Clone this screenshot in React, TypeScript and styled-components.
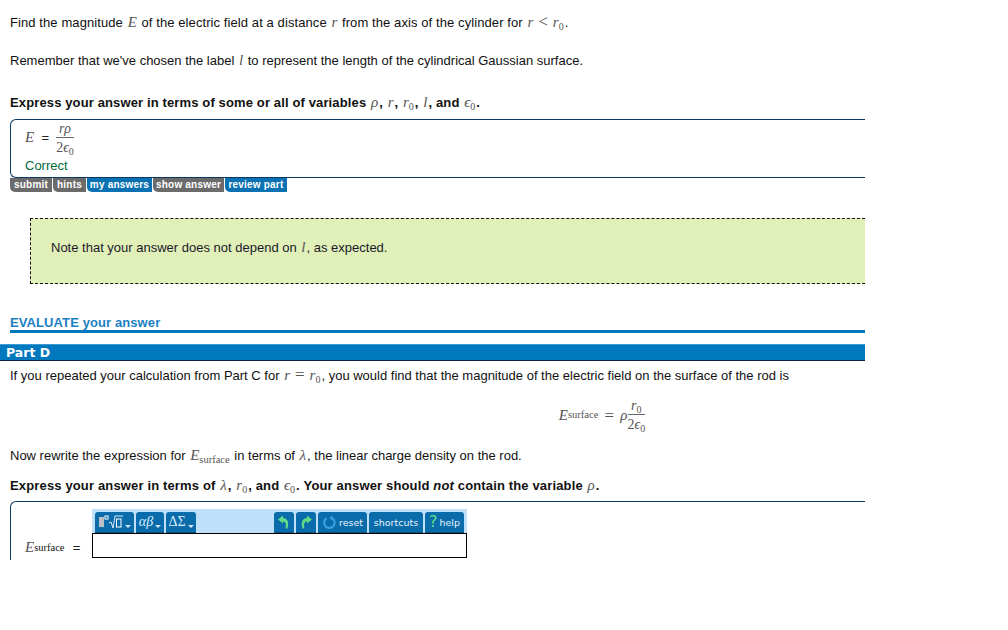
import React from "react";
import styled, { createGlobalStyle } from "styled-components";

const Global = createGlobalStyle`
  html, body { margin: 0; padding: 0; background: #fff; }
  body { font-family: "Liberation Sans", Arial, sans-serif; font-size: 13px; color: #111; }
`;
const Page = styled.div`width: 865px; height: 630px; overflow: hidden;`;
const Body = styled.div`padding: 15px 0 0 10px;`;
const Para = styled.p<{ $gap: number; $bold?: boolean; $track?: number }>`
  margin: 0 0 ${(p) => p.$gap}px;
  line-height: 15px;
  height: 15px;
  font-size: 13px;
  font-weight: ${(p) => (p.$bold ? 700 : 400)};
  letter-spacing: ${(p) => p.$track ?? 0}px;
  white-space: nowrap;
`;
const M = styled.span`
  font-family: "Liberation Serif", serif;
  font-style: italic;
  font-weight: 400;
  font-size: 15px;
  line-height: 0;
  color: #555;
  margin: 0 1px;
  letter-spacing: 0;
  sub { font-style: normal; font-size: 10px; line-height: 0; vertical-align: -3px; }
`;
const Rel = styled.span`
  font-family: "Liberation Serif", serif;
  font-size: 17px;
  line-height: 0;
  color: #555;
  margin: 0 4px;
  letter-spacing: 0;
`;
const AnswerBox = styled.div`
  height: 59px;
  box-sizing: border-box;
  border: 1px solid #0b3a66;
  border-right: none;
  border-radius: 6px 0 0 6px;
  padding: 0 0 0 14px;
`;
const EquationRow = styled.div`display: flex; align-items: center; height: 35px;`;
const EqLabel = styled.span`
  font-family: "Liberation Serif", serif;
  font-style: italic;
  font-size: 15px;
  color: #555;
`;
const EqSign = styled.span<{ $w: number }>`
  width: ${(p) => p.$w}px;
  text-align: center;
  font-size: 13px;
  color: #222;
`;
const DisplaySign = styled.span`
  width: 22px;
  text-align: center;
  font-family: "Liberation Serif", serif;
  font-size: 17px;
  line-height: 15px;
  color: #555;
`;
const Frac = styled.span`
  display: inline-flex;
  flex-direction: column;
  align-items: center;
  font-family: "Liberation Serif", serif;
  font-size: 14px;
  color: #555;
  line-height: 15px;
  sub { font-size: 10px; line-height: 0; vertical-align: -3px; }
  i { font-style: italic; }
`;
const FracTop = styled.span`
  display: block;
  width: 100%;
  text-align: center;
  border-bottom: 1px solid #666;
  padding-bottom: 1px;
  margin-bottom: 2px;
`;
const Correct = styled.div`color: #006a3a; font-size: 13px; line-height: 15px; margin-top: 3px;`;
const Tabs = styled.div`display: flex; height: 13px; margin-bottom: 27px;`;
const Tab = styled.span<{ $w: number; $blue?: boolean }>`
  width: ${(p) => p.$w}px;
  box-sizing: border-box;
  height: 14px;
  background: ${(p) => (p.$blue ? "#0a71b3" : "#6b6b6b")};
  border-right: 1px solid #fff;
  border-radius: 0 0 0 5px;
  color: #fff;
  font-weight: 700;
  font-size: 10px;
  letter-spacing: 0.2px;
  line-height: 13px;
  text-align: center;
  white-space: nowrap;
`;
const Note = styled.div`
  margin-left: 20px;
  height: 66px;
  box-sizing: border-box;
  border: 1px dashed #111;
  border-right: none;
  background: #e1efb9;
  padding: 0 0 8px 20px;
  display: flex;
  align-items: center;
  font-size: 13px;
  color: #1a1a2a;
`;
const Evaluate = styled.h3`
  margin: 31px 0 11px;
  height: 15px;
  font-size: 13px;
  letter-spacing: 0.1px;
  line-height: 15px;
  font-weight: 700;
  color: #1a80c4;
  border-bottom: 3px solid #0278be;
`;
const PartBar = styled.div`
  height: 17px;
  box-sizing: border-box;
  background: #0278be;
  border-top: 1px solid #3b9bd4;
  border-bottom: 1px solid #06223f;
  color: #fff;
  font-family: "DejaVu Sans", sans-serif;
  font-weight: 700;
  font-size: 12.5px;
  line-height: 15px;
  padding-left: 6px;
`;
const PartBody = styled.div`padding: 7px 0 0 10px;`;
const Display = styled.div`
  display: flex;
  justify-content: center;
  align-items: center;
  height: 40px;
  margin: 12px 0 13px;
  padding-left: 329px;
  font-family: "Liberation Serif", serif;
  font-size: 15px;
  color: #555;
  i { font-style: italic; }
`;
const Small = styled.span`font-size: 10.5px; font-style: normal; font-family: "Liberation Serif", serif; vertical-align: -3px; line-height: 0;`;
const InputBox = styled.div`
  height: 59px;
  box-sizing: border-box;
  border-top: 1px solid #0b3a66;
  border-left: 1px solid #0b3a66;
  border-top-left-radius: 6px;
  padding: 7px 0 0 14px;
  display: flex;
  align-items: flex-end;
`;
const InputLabel = styled.div`display: flex; align-items: center; height: 25px; width: 67px; margin-bottom: 0;`;
const Editor = styled.div`width: 375px; display: flex; flex-direction: column; margin-bottom: 2px;`;
const Toolbar = styled.div`
  height: 24px;
  background: #bfdffb;
  display: flex;
  justify-content: space-between;
  padding: 3px 3px 0;
  box-sizing: border-box;
`;
const Group = styled.div`display: flex; gap: 2px;`;
const ToolBtn = styled.span<{ $w: number }>`
  width: ${(p) => p.$w}px;
  height: 21px;
  box-sizing: border-box;
  background: #0a6cab;
  border-radius: 3px 3px 0 0;
  border-bottom: 1px solid #07517f;
  color: #e8f4fc;
  display: flex;
  align-items: center;
  justify-content: center;
  gap: 2px;
  font-family: "DejaVu Sans", sans-serif;
  font-size: 9.5px;
  white-space: nowrap;
`;
const Sym = styled.span`font-family: "Liberation Serif", serif; font-size: 14px; color: #d8ecfa; font-style: italic;`;
const SymUp = styled(Sym)`font-style: normal;`;
const Caret = styled.span`
  width: 0; height: 0; margin-top: 8px;
  border-left: 3px solid transparent;
  border-right: 3px solid transparent;
  border-top: 3px solid #cfe6f8;
`;
const Help = styled.span`color: #63e08a; font-size: 16px; font-weight: 400; font-family: "DejaVu Sans", sans-serif; line-height: 1;`;
const Field = styled.div`height: 25px; box-sizing: border-box; border: 1px solid #000; background: #fff;`;

const Tpl = () => (
  <svg width="24" height="16" viewBox="0 0 24 16" fill="none">
    <rect x="0" y="3" width="5" height="10" fill="#b9bfc4" />
    <rect x="6" y="2" width="3" height="3" stroke="#fff" />
    <path d="M10 9 L12 8 L14 14 L16 2 L24 2" stroke="#d8ecfa" strokeWidth="1" />
    <rect x="17.5" y="5" width="4.5" height="8" stroke="#fff" />
  </svg>
);
const Arrow = ({ flip }: { flip?: boolean }) => (
  <svg width="14" height="14" viewBox="0 0 14 14" fill="none" style={flip ? { transform: "scaleX(-1)" } : undefined}>
    <path d="M1 4.5 L6 0.5 L6 3 C10 3 12.5 6.5 10.5 13.5 L8.5 13.5 C9.5 9 8.5 6.5 6 6.5 L6 8.5 Z" fill="#5fdc86" />
  </svg>
);
const Reset = () => (
  <svg width="15" height="15" viewBox="0 0 15 15" fill="none">
    <path d="M4.5 3.2 A5.3 5.3 0 1 0 10 3" stroke="#3aa4e8" strokeWidth="2" />
    <path d="M10.5 0.5 L10.5 5.5 L7.5 3 Z" fill="#3aa4e8" />
  </svg>
);

export default function App() {
  return (
    <Page>
      <Global />
      <Body>
        <Para $gap={23} $track={0.09}>
          Find the magnitude <M>E</M> of the electric field at a distance <M>r</M> from the axis of the cylinder for <M>r</M><Rel>&lt;</Rel><M>r<sub>0</sub></M>.
        </Para>
        <Para $gap={27}>
          Remember that we've chosen the label <M>l</M> to represent the length of the cylindrical Gaussian surface.
        </Para>
        <Para $gap={9} $bold $track={0.13}>
          Express your answer in terms of some or all of variables <M>ρ</M>, <M>r</M>, <M>r<sub>0</sub></M>, <M>l</M>, and <M>ϵ<sub>0</sub></M>.
        </Para>
        <AnswerBox>
          <EquationRow>
            <EqLabel>E</EqLabel>
            <EqSign $w={22}>=</EqSign>
            <Frac>
              <FracTop><i>rρ</i></FracTop>
              <span>2<i>ϵ</i><sub>0</sub></span>
            </Frac>
          </EquationRow>
          <Correct>Correct</Correct>
        </AnswerBox>
        <Tabs>
          <Tab $w={43}>submit</Tab>
          <Tab $w={34}>hints</Tab>
          <Tab $w={66} $blue>my answers</Tab>
          <Tab $w={72}>show answer</Tab>
          <Tab $w={63} $blue>review part</Tab>
        </Tabs>
        <Note>
          <span>Note that your answer does not depend on <M>l</M>, as expected.</span>
        </Note>
        <Evaluate>EVALUATE your answer</Evaluate>
      </Body>
      <PartBar>Part D</PartBar>
      <PartBody>
        <Para $gap={0}>
          If you repeated your calculation from Part C for <M>r</M><Rel>=</Rel><M>r<sub>0</sub></M>, you would find that the magnitude of the electric field on the surface of the rod is
        </Para>
        <Display>
          <i>E</i><Small>surface</Small>
          <DisplaySign>=</DisplaySign>
          <i>ρ</i>
          <Frac>
            <FracTop><i>r</i><sub>0</sub></FracTop>
            <span>2<i>ϵ</i><sub>0</sub></span>
          </Frac>
        </Display>
        <Para $gap={15}>
          Now rewrite the expression for <M>E<Small>surface</Small></M> in terms of <M>λ</M>, the linear charge density on the rod.
        </Para>
        <Para $gap={8} $bold $track={0.15}>
          Express your answer in terms of <M>λ</M>, <M>r<sub>0</sub></M>, and <M>ϵ<sub>0</sub></M>. Your answer should <em>not</em> contain the variable <M>ρ</M>.
        </Para>
        <InputBox>
          <InputLabel>
            <EqLabel>E</EqLabel><Small>surface</Small>
            <EqSign $w={24}>=</EqSign>
          </InputLabel>
          <Editor>
            <Toolbar>
              <Group>
                <ToolBtn $w={39}><Tpl /><Caret /></ToolBtn>
                <ToolBtn $w={28}><Sym>αβ</Sym><Caret /></ToolBtn>
                <ToolBtn $w={30}><SymUp>ΔΣ</SymUp><Caret /></ToolBtn>
              </Group>
              <Group>
                <ToolBtn $w={20}><Arrow /></ToolBtn>
                <ToolBtn $w={20}><Arrow flip /></ToolBtn>
                <ToolBtn $w={49}><Reset />reset</ToolBtn>
                <ToolBtn $w={54}>shortcuts</ToolBtn>
                <ToolBtn $w={39}><Help>?</Help>help</ToolBtn>
              </Group>
            </Toolbar>
            <Field />
          </Editor>
        </InputBox>
      </PartBody>
    </Page>
  );
}
